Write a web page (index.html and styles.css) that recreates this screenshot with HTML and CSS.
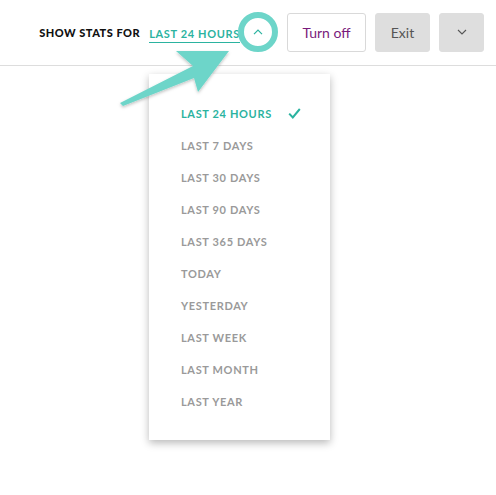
FILE: index.html
```html
<!DOCTYPE html>
<html>
<head>
<meta charset="utf-8">
<link rel="stylesheet" href="styles.css">
</head>
<body>
<header class="topbar">
  <span class="label">SHOW STATS FOR</span>
  <span class="range-link">LAST 24 HOURS</span>
  <span class="toggle">
    <svg class="chev-up" width="10" height="6" viewBox="0 0 10 6"><path d="M1 5.2 L5 1.2 L9 5.2" fill="none" stroke="#2bb3a0" stroke-width="1.2"/></svg>
    <span class="ring"></span>
  </span>
  <button class="btn btn-outline">Turn off</button>
  <button class="btn btn-grey">Exit</button>
  <button class="btn btn-grey btn-more">
    <svg width="10" height="6" viewBox="0 0 10 6"><path d="M1 1 L5 5 L9 1" fill="none" stroke="#555" stroke-width="1.1"/></svg>
  </button>
</header>

<ul class="menu">
  <li class="item active">LAST 24 HOURS
    <svg class="check" width="13" height="11" viewBox="0 0 13 11"><path d="M1.2 5.6 L4.8 9.4 L11.8 1" fill="none" stroke="#2bb3a0" stroke-width="2"/></svg>
  </li>
  <li class="item">LAST 7 DAYS</li>
  <li class="item">LAST 30 DAYS</li>
  <li class="item">LAST 90 DAYS</li>
  <li class="item">LAST 365 DAYS</li>
  <li class="item">TODAY</li>
  <li class="item">YESTERDAY</li>
  <li class="item">LAST WEEK</li>
  <li class="item">LAST MONTH</li>
  <li class="item">LAST YEAR</li>
</ul>

<svg class="pointer" width="496" height="495" viewBox="0 0 496 495">
  <defs>
    <filter id="sh" x="-20%" y="-20%" width="140%" height="140%">
      <feDropShadow dx="0" dy="1.5" stdDeviation="1.5" flood-color="#000" flood-opacity="0.25"/>
    </filter>
  </defs>
  <polygon filter="url(#sh)" fill="#6dd5c9" points="120,103 193,66 176,51 229,51 198,92 194,78 123,106"/>
</svg>
</body>
</html>
```
FILE: styles.css
```css
html, body {
  margin: 0;
  padding: 0;
  background: #fff;
  font-family: "Lato", "Liberation Sans", sans-serif;
}
.topbar {
  height: 66px;
  box-sizing: border-box;
  border-bottom: 1px solid #dddddd;
  display: flex;
  align-items: center;
  justify-content: flex-end;
  padding: 0 12px 1px 0;
}
.label {
  font-size: 11px;
  font-weight: 900;
  color: #111;
  letter-spacing: 0.5px;
  margin-right: 9px;
}
.range-link {
  font-size: 11px;
  font-weight: 700;
  color: #2bb3a0;
  letter-spacing: 0.65px;
  border-bottom: 1px solid #2bb3a0;
  padding: 1px 0 2px 0;
  margin-top: 4px;
}
.toggle {
  position: relative;
  width: 30px;
  height: 30px;
  display: flex;
  align-items: center;
  justify-content: center;
  margin-left: 3px;
  margin-right: 14px;
}
.chev-up { display: block; }
.ring {
  position: absolute;
  left: -5px;
  top: -5px;
  width: 40px;
  height: 40px;
  box-sizing: border-box;
  border: 6px solid #6dd5c9;
  border-radius: 50%;
}
.btn {
  height: 39px;
  border-radius: 3px;
  font-family: "Lato", "Liberation Sans", sans-serif;
  font-size: 14px;
  padding: 0;
  margin-left: 9px;
  display: flex;
  align-items: center;
  justify-content: center;
}
.btn-outline {
  width: 79px;
  margin-left: 0;
  background: #fff;
  border: 1px solid #d9d9d9;
  color: #7a1a7c;
}
.btn-grey {
  width: 55px;
  background: #dedede;
  border: 1px solid #dedede;
  color: #555;
}
.btn-more { width: 45px; }
.btn-more svg { display: block; }
.menu {
  position: absolute;
  left: 149px;
  top: 74px;
  width: 181px;
  height: 366px;
  box-sizing: border-box;
  margin: 0;
  padding: 23px 0 0 32px;
  list-style: none;
  background: #fff;
  box-shadow: 0 3px 8px rgba(0,0,0,0.28);
}
.item {
  height: 32px;
  display: flex;
  align-items: center;
  font-size: 11px;
  font-weight: 700;
  letter-spacing: 0.65px;
  color: #9a9a9a;
}
.item.active { color: #2bb3a0; }
.check { margin-left: 16px; }
.pointer {
  position: absolute;
  left: 0;
  top: 0;
  pointer-events: none;
}
```
